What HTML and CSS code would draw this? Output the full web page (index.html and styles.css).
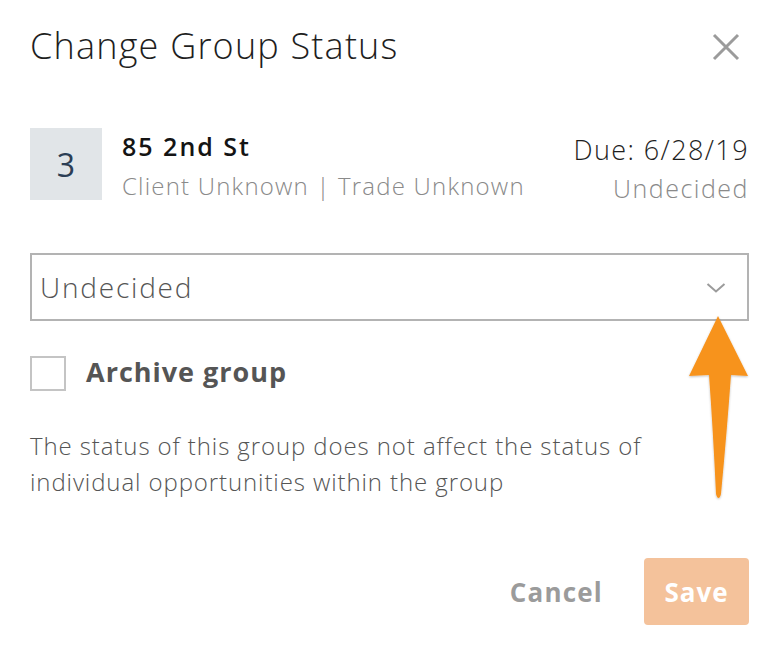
FILE: index.html
```html
<!DOCTYPE html>
<html lang="en">
<head>
<meta charset="utf-8">
<title>Change Group Status</title>
<link rel="stylesheet" href="styles.css">
</head>
<body>
<div class="dialog">
  <div class="header">
    <h1 class="title">Change Group Status</h1>
    <button class="close" aria-label="Close">
      <svg width="28" height="28" viewBox="0 0 28 28"><path d="M2 2 L26 26 M26 2 L2 26" stroke="#9b9b9b" stroke-width="3" fill="none"/></svg>
    </button>
  </div>

  <div class="item">
    <div class="badge">3</div>
    <div class="info">
      <div class="name">85 2nd St</div>
      <div class="sub">Client Unknown | Trade Unknown</div>
    </div>
    <div class="meta">
      <div class="due">Due: 6/28/19</div>
      <div class="state">Undecided</div>
    </div>
  </div>

  <div class="select">
    <span class="select-value">Undecided</span>
    <svg class="chevron" width="20" height="12" viewBox="0 0 20 12"><path d="M1.5 2 L10 9.5 L18.5 2" stroke="#9b9b9b" stroke-width="2" fill="none"/></svg>
  </div>

  <label class="check-row">
    <span class="checkbox"></span>
    <span class="check-label">Archive group</span>
  </label>

  <p class="note">The status of this group does not affect the status of individual opportunities within the group</p>

  <div class="footer">
    <button class="btn-cancel">Cancel</button>
    <button class="btn-save">Save</button>
  </div>
</div>

<svg class="arrow" width="80" height="200" viewBox="0 0 80 200">
  <defs>
    <filter id="sh" x="-20%" y="-10%" width="140%" height="120%">
      <feDropShadow dx="0" dy="1" stdDeviation="1" flood-color="#000" flood-opacity="0.25"/>
    </filter>
  </defs>
  <path d="M38 6 L68 66 L51 65 Q47 120 41 184 Q40 188 38.5 188 Q37 188 36 184 Q33 120 29 65 L9 66 Z" fill="#f7931e" filter="url(#sh)"/>
</svg>
</body>
</html>
```

FILE: styles.css
```css
* { box-sizing: border-box; }

html, body {
  margin: 0;
  padding: 0;
  background: #ffffff;
}

body {
  width: 784px;
  height: 658px;
  position: relative;
  overflow: hidden;
  font-family: "Open Sans", "Lato", sans-serif;
}

.dialog {
  padding: 22px 35px 0 30px;
}

.header {
  display: flex;
  justify-content: space-between;
  align-items: center;
  height: 48px;
}

.title {
  margin: 0;
  font-size: 36px;
  font-weight: 300;
  line-height: 48px;
  letter-spacing: 1.2px;
  color: #1e1e1e;
}

.close {
  background: none;
  border: 0;
  padding: 0;
  margin-right: 9px;
  margin-top: 2px;
  display: flex;
}

.item {
  margin-top: 58px;
  display: flex;
  align-items: flex-start;
  gap: 20px;
}

.badge {
  width: 72px;
  height: 72px;
  background: #e1e5e8;
  color: #2b3e55;
  font-size: 32px;
  font-weight: 400;
  display: flex;
  align-items: center;
  justify-content: center;
}

.info {
  flex: 1;
  padding-top: 1px;
}

.name {
  font-size: 25px;
  font-weight: 600;
  line-height: 34px;
  letter-spacing: 2px;
  color: #141414;
}

.sub {
  margin-top: 5px;
  font-size: 24px;
  font-weight: 300;
  line-height: 36px;
  letter-spacing: 1.2px;
  color: #8a8a8a;
}

.meta {
  text-align: right;
  padding-top: 6px;
}

.due {
  font-size: 27px;
  font-weight: 300;
  line-height: 32px;
  letter-spacing: 1.4px;
  color: #1e1e1e;
}

.state {
  margin-top: 6px;
  font-size: 25px;
  font-weight: 300;
  line-height: 32px;
  letter-spacing: 1.5px;
  color: #8a8a8a;
}

.select {
  margin-top: 49px;
  height: 68px;
  border: 2px solid #b3b3b3;
  display: flex;
  align-items: center;
  justify-content: space-between;
  padding: 0 21px 0 8px;
}

.select-value {
  font-size: 28px;
  font-weight: 300;
  letter-spacing: 1.8px;
  color: #555555;
}

.chevron {
  margin-top: 2px;
}

.check-row {
  margin-top: 35px;
  display: flex;
  align-items: center;
  gap: 20px;
}

.checkbox {
  width: 36px;
  height: 35px;
  border: 2px solid #c4c4c4;
  display: block;
}

.check-label {
  font-size: 27px;
  font-weight: 700;
  letter-spacing: 1px;
  color: #555555;
  margin-top: -4px;
}

.note {
  margin: 37px 0 0;
  font-size: 24px;
  font-weight: 300;
  line-height: 36px;
  letter-spacing: 0.9px;
  color: #555555;
  max-width: 640px;
}

.footer {
  margin-top: 58px;
  display: flex;
  justify-content: flex-end;
  align-items: center;
  gap: 41px;
}

.btn-cancel {
  background: none;
  border: 0;
  padding: 0;
  font-family: inherit;
  font-size: 26px;
  font-weight: 700;
  letter-spacing: 1.2px;
  color: #9b9b9b;
}

.btn-save {
  width: 105px;
  height: 67px;
  border: 0;
  border-radius: 4px;
  background: #f4c29b;
  color: #ffffff;
  font-family: inherit;
  font-size: 26px;
  font-weight: 700;
  letter-spacing: 1px;
}

.arrow {
  position: absolute;
  left: 680px;
  top: 310px;
}
```
